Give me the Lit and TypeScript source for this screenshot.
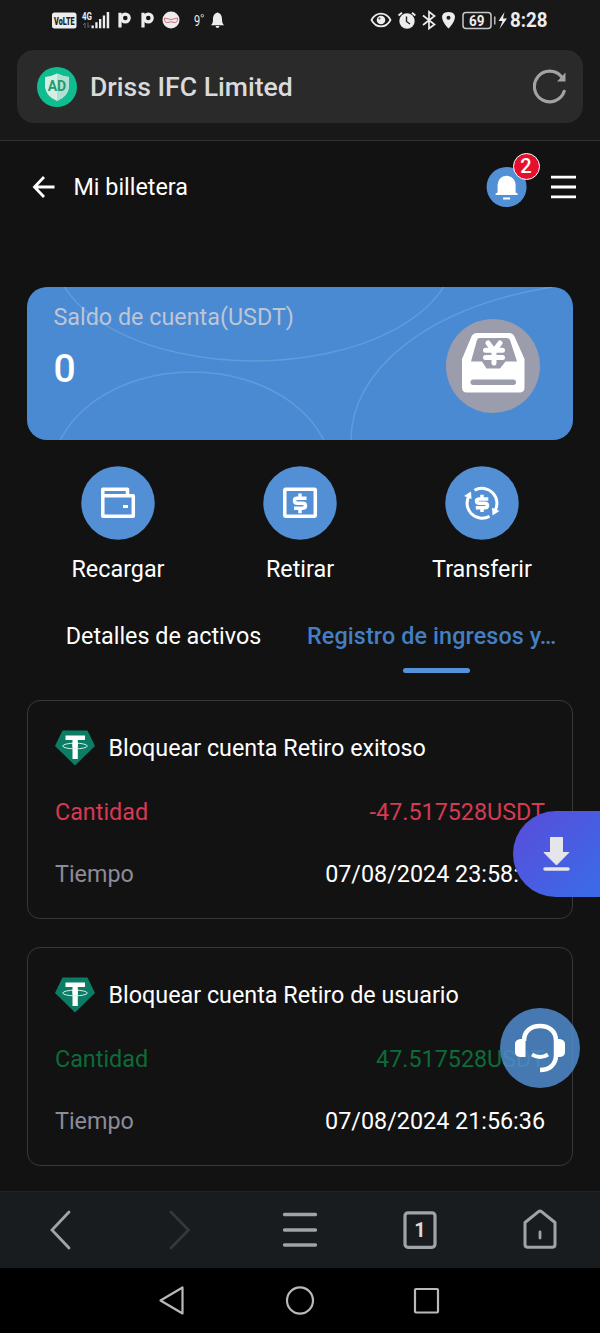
import { LitElement, html, css, svg } from "lit";
import { customElement, property } from "lit/decorators.js";

@customElement("record-card")
class RecordCard extends LitElement {
  @property() heading = "";
  @property() amount = "";
  @property() time = "";
  @property() tone = "loss";

  static styles = css`
    :host { display: block; }
    .card {
      box-sizing: border-box; height: 219px; padding: 24px 27px 0 27px;
      border: 1.5px solid #38383a; border-radius: 13px;
      display: flex; flex-direction: column;
    }
    .title { display: flex; align-items: center; height: 46px; gap: 13.5px; color: #fff; }
    .title svg { display: block; flex: none; }
    .row { display: flex; justify-content: space-between; align-items: center; height: 34px; color: #fff; }
    .amount { margin-top: 24px; margin-bottom: 28px; }
    .label { color: #8c8b99; }
    .loss, .loss .label { color: #d63a54; }
    .gain, .gain .label { color: #0d6b39; }
    .clipped { padding-right: 26.2px; }
  `;

  render() {
    return html`
      <div class="card">
        <div class="title">
          <svg width="40" height="36" viewBox="0 0 40 36">
            <path d="M7.500 0.500H32.500L40 16L20 35.500L0 16Z" fill="#0b7d65" />
            <path d="M10.500 5.500H30V10H22.800V29H17.500V10H10.500Z" fill="#fff" />
            <ellipse cx="20" cy="16" rx="12.300" ry="2.800" fill="none" stroke="#d9eee8" stroke-width="1" />
            <path d="M17.500 12.500H22.800V17H17.500Z" fill="#fff" />
          </svg>
          <span>${this.heading}</span>
        </div>
        <div class="row amount ${this.tone}"><span class="label">Cantidad</span><span>${this.amount}</span></div>
        <div class="row"><span class="label">Tiempo</span><span class=${this.time.endsWith(":") ? "clipped" : ""}>${this.time}</span></div>
      </div>`;
  }
}

const walletIcon = svg`<g fill="none" stroke="#fff" stroke-width="3.500" stroke-linejoin="round">
  <path d="M21.800 30V23.300H46.500V30M21.800 29.800H52.300V50.200H21.800Z"/><path d="M42 40.500H47" stroke-width="3"/></g>`;
const dollar = svg`<path d="M43.500 32.300H34Q31.500 32.300 31.500 34.700Q31.500 37.200 34.500 37.200H39.500Q42.500 37.200 42.500 39.700Q42.500 42.200 39.500 42.200H31M37 27.500V32.500M37 42V47.300" fill="none" stroke="#fff" stroke-width="3.500"/>`;
const withdrawIcon = svg`<rect x="21.800" y="23.300" width="30.500" height="27" rx="1" fill="none" stroke="#fff" stroke-width="3.500"/>${dollar}`;
const transferIcon = svg`
  <g fill="none" stroke="#fff" stroke-width="3">
    <path d="M29.500 24.300A15 15 0 0 1 49.500 45.500"/><path d="M44.500 50.200A15 15 0 0 1 24.500 29"/>
  </g>
  <path d="M19 30L26 25.500L26.500 33ZM54.500 45L47.500 49.500L47 41.800Z" fill="#fff"/>
  <path d="M43.300 33H34.500Q31.500 33 31.500 35Q31.500 37.200 34.500 37.200H39.500Q42.500 37.200 42.500 39.400Q42.500 41.800 39.500 41.800H30.800M37 28.800V33M37 41.500V46" fill="none" stroke="#fff" stroke-width="3.500"/>`;

@customElement("app-root")
class AppRoot extends LitElement {
  static styles = css`
    :host {
      display: flex; flex-direction: column; position: relative; width: 600px; height: 1333px; overflow: hidden;
      background: #121212; color: #fff; font: 400 23.33px/34px Roboto, sans-serif;
    }
    svg { display: block; flex: none; }
    .chrome { height: 140px; background: #181818; border-bottom: 1px solid #303030; flex: none; }
    .status { height: 50px; }
    .glyph { font-family: Roboto, sans-serif; }
    .address {
      box-sizing: border-box; display: flex; align-items: center; height: 73px; margin: 0 17px;
      padding: 0 16px 0 20px; border-radius: 17px; background: #2a2a2a;
    }
    .site { flex: 1; margin-left: 13px; font-size: 26.6px; font-weight: 500; color: #dadada; padding-top: 1px; }
    .header { box-sizing: border-box; display: flex; align-items: center; height: 91px; padding: 0 24px 0 32px; flex: none; }
    .header .name { flex: 1; margin-left: 18.5px; }
    .bell { position: relative; width: 40px; height: 40px; margin-right: 24px; }
    .badge {
      position: absolute; left: 26.5px; top: -13.5px; box-sizing: border-box; width: 27px; height: 27px;
      border: 1.600px solid #fff; border-radius: 50%; background: #e60f2d;
      font-size: 20px; line-height: 25px; font-weight: 500; text-align: center;
    }
    .balance {
      position: relative; display: flex; justify-content: space-between; height: 153px; margin: 55px 27px 0;
      border-radius: 20px; background: #4a8ad3; overflow: hidden; flex: none;
    }
    .curves { position: absolute; left: 0; top: 0; }
    .figures { position: relative; padding: 13px 0 0 26.500px; }
    .caption { color: #bec5d3; }
    .sum { font-size: 39px; line-height: 46px; font-weight: 500; margin-top: 12px; }
    .safe { position: relative; margin: 32px 33px 0 0; }
    .actions { display: grid; grid-template-columns: repeat(3, 1fr); margin: 26px 27px 0; flex: none; }
    .action { display: flex; flex-direction: column; align-items: center; gap: 12px; }
    .tabs { display: grid; grid-template-columns: 1fr 1fr; margin: 33px 27px 27px; flex: none; }
    .tab { display: flex; flex-direction: column; align-items: center; white-space: nowrap; }
    .active { color: #447fc3; font-weight: 500; letter-spacing: 0.12px; }
    .active .word { align-self: flex-start; margin-left: 7px; }
    .bar { width: 67px; height: 5px; border-radius: 3px; background: #5592da; margin-top: 15px; }
    .list { display: flex; flex-direction: column; gap: 27.500px; margin: 0 27px; height: 491px; flex: none; }
    .toolbar {
      box-sizing: border-box; display: grid; grid-template-columns: repeat(5, 1fr); place-items: center;
      height: 77px; border-top: 1px solid #222527; background: #181c1f; flex: none;
    }
    .system { display: flex; align-items: center; height: 65px; background: #000; flex: none; }
    .download {
      position: absolute; right: 0; top: 811px; width: 87px; height: 86px; border-radius: 43px 0 0 43px;
      background: linear-gradient(135deg, #574fdb 10%, #3c69e7 90%);
    }
    .support {
      position: absolute; left: 500px; top: 1008px; width: 80px; height: 80px; border-radius: 50%;
      background: rgba(81, 141, 209, 0.84);
    }
  `;

  render() {
    return html`
      <div class="chrome">
        <svg class="status" width="600" height="50" viewBox="0 0 600 50">
          <g fill="#ededed" class="glyph">
            <rect x="52" y="12.500" width="24.500" height="16" rx="2.500" />
            <text transform="translate(54 24.700) scale(.66 1)" font-size="11" font-weight="900" fill="#202020">VoLTE</text>
            <text transform="translate(82 19.500) scale(.72 1)" font-size="11" font-weight="700">4G</text>
            <path d="M85 28V23L83 25M88 22.500V27.500L90 25.500" fill="none" stroke="#666" stroke-width="1" />
            <path d="M91.500 25.500h2.300v2.800h-2.300zM95.300 22.300h2.300v6h-2.300zM99 19h2.300v9.300H99zM102.800 15.500h2.300v12.800h-2.300zM106.700 12h2.500v16.300h-2.500z" />
            <g fill="none" stroke="#ededed">
              <path d="M120 12.800V27.500M143 12.800V27.500" stroke-width="3.200" />
              <circle cx="125.300" cy="18" r="3.900" stroke-width="3.200" />
              <circle cx="148.300" cy="18" r="3.900" stroke-width="3.200" />
            </g>
            <circle cx="171" cy="20" r="8.500" />
            <path d="M164.500 18Q171 21 177.500 18Q178 23 174 22.500Q171 21 168 22.500Q164 23 164.500 18Z" fill="#f3e3e5" stroke="#c47a80" stroke-width="1" />
            <text x="194" y="25.500" font-size="15" textLength="6.200" lengthAdjust="spacingAndGlyphs">9</text>
            <circle cx="202.300" cy="15.700" r="1.300" fill="none" stroke="#ededed" stroke-width=".8" />
            <path d="M217.500 12.500C213.500 13.500 213 17 213 19.500C213 23 212 24 211 25.200H224C223 24 222 23 222 19.500C222 17 221.500 13.500 217.500 12.500ZM215.500 26H219.500Q219 28 217.500 28Q216 28 215.500 26Z" />
            <path d="M371.500 20C376 11.500 386 11.500 390.500 20C386 28.500 376 28.500 371.500 20Z" fill="none" stroke="#ededed" stroke-width="1.700" />
            <circle cx="381" cy="20" r="4.300" /><circle cx="379.500" cy="18.500" r="1" fill="#444" />
            <circle cx="407" cy="21" r="7.700" />
            <path d="M398.500 15.500L402 12.800M415.300 15.500L412 12.800" stroke="#ededed" stroke-width="2" fill="none" />
            <path d="M406.500 16.500V21.500L410 24" fill="none" stroke="#252525" stroke-width="1.400" />
            <path d="M423 15.500L434.500 24.500L429 28.500V11.800L434.500 16L423 25" fill="none" stroke="#ededed" stroke-width="1.700" />
            <path d="M448.500 12C438.500 12.500 441.500 21.500 448.500 28.500C455.500 21.500 458.500 12.500 448.500 12Z" /><circle cx="448.500" cy="17.800" r="2" fill="#222" />
            <rect x="463" y="12.500" width="28" height="16" rx="3" fill="none" stroke="#c8c8c8" stroke-width="1.500" />
            <text x="469" y="25.700" font-size="14.500" font-weight="700" textLength="15.500" lengthAdjust="spacingAndGlyphs">69</text>
            <rect x="494" y="16.500" width="1.500" height="8" fill="#bbb" />
            <path d="M504.500 12L498.500 21H502.500L499.500 29L507 18.500H503Z" />
            <text x="510" y="27.200" font-size="20" font-weight="700" textLength="37.500" lengthAdjust="spacingAndGlyphs">8:28</text>
          </g>
        </svg>
        <div class="address">
          <svg width="40" height="40" viewBox="0 0 40 40">
            <circle cx="20" cy="20" r="20" fill="#10bd91" />
            <path d="M20 6.500Q26 9.500 32 10V20Q31 29.500 20 34Q9 29.500 8 20V10Q14 9.500 20 6.500Z" fill="#d5eee5" />
            <path d="M20 6.500Q26 9.500 32 10V20Q31 29.500 20 34Z" fill="#b2dfcf" />
            <text class="glyph" x="10.700" y="24.200" font-size="14.500" font-weight="700" fill="#239c70" textLength="18.500" lengthAdjust="spacingAndGlyphs">AD</text>
          </svg>
          <span class="site">Driss IFC Limited</span>
          <svg width="34" height="36" viewBox="0 0 34 36">
            <path d="M31.200 22.300A15.300 15.300 0 1 1 28.500 7.800" fill="none" stroke="#a2a3a7" stroke-width="3.200" stroke-linecap="round" />
            <path d="M24 12.500L32.500 3.500V12.500Z" fill="#a2a3a7" />
          </svg>
        </div>
      </div>

      <div class="header">
        <svg width="23" height="24" viewBox="0 0 23 24">
          <path d="M22.500 12H2.500M12 2L2.500 12L12 22" fill="none" stroke="#fff" stroke-width="2.800" />
        </svg>
        <span class="name">Mi billetera</span>
        <div class="bell">
          <svg width="41" height="40" viewBox="0 0 41 40">
            <g transform="translate(.6 0)">
              <circle cx="20" cy="20" r="20" fill="#5290d6" />
              <path d="M11 25.500V18Q11.500 9.500 20 8.800Q28.500 9.500 29 18V25.500L31 26.500V28H9V26.500ZM16.500 30.500H23.500V32.500H16.500Z" fill="#fff" />
            </g>
          </svg>
          <span class="badge">2</span>
        </div>
        <svg width="26" height="24" viewBox="0 0 26 24">
          <path d="M1 2.200H26M1 12H26M1 21.800H26" stroke="#fff" stroke-width="2.800" />
        </svg>
      </div>

      <div class="balance">
        <svg class="curves" width="546" height="153" viewBox="27 287 546 153">
          <g fill="none" stroke="#629bdc" stroke-width="1.500">
            <ellipse cx="254" cy="252" rx="200" ry="109" />
            <ellipse cx="192" cy="475" rx="140" ry="103" />
            <path d="M351 440C351 372 424 308 552 287" />
          </g>
        </svg>
        <div class="figures">
          <div class="caption">Saldo de cuenta(USDT)</div>
          <div class="sum">0</div>
        </div>
        <svg class="safe" width="94" height="94" viewBox="0 0 94 94">
          <circle cx="47" cy="47" r="47" fill="#9b9cac" />
          <path d="M31 14H63Q67 14 68.500 17.500L78.500 40V68.500Q78.500 73.500 73.500 73.500H21Q16 73.500 16 68.500V40L25.500 17.500Q27 14 31 14Z" fill="#fff" />
          <path d="M33.500 19H61Q63 19 64 21L71 42.500H59.500L54 49.500H40.500L36 42.500H25L31 21Q31.500 19 33.500 19Z" fill="#9b9cac" />
          <path d="M42 24L48 32L54 24M39.500 31.200H56.500M39.500 38.500H56.500M48 31V44" fill="none" stroke="#fff" stroke-width="5" stroke-linecap="round" stroke-linejoin="round" />
          <rect x="24.500" y="60.500" width="45.500" height="5.500" rx="2.700" fill="#9b9cac" />
        </svg>
      </div>

      <div class="actions">
        ${[["Recargar", walletIcon], ["Retirar", withdrawIcon], ["Transferir", transferIcon]].map(
          ([label, icon]) => html`
            <div class="action">
              <svg width="74" height="74" viewBox="0 0 74 74"><circle cx="37" cy="37" r="36.700" fill="#528fd5" />${icon}</svg>
              <span>${label}</span>
            </div>`
        )}
      </div>

      <div class="tabs">
        <div class="tab"><span>Detalles de activos</span></div>
        <div class="tab active"><span class="word">Registro de ingresos y…</span><span class="bar"></span></div>
      </div>

      <div class="list">
        <record-card heading="Bloquear cuenta Retiro exitoso" amount="-47.517528USDT" time="07/08/2024 23:58:" tone="loss"></record-card>
        <record-card heading="Bloquear cuenta Retiro de usuario" amount="47.517528USDT" time="07/08/2024 21:56:36" tone="gain"></record-card>
      </div>

      <div class="toolbar">
        <svg width="40" height="44" viewBox="0 0 40 44"><path d="M29 4L12 22L29 40" fill="none" stroke="#a0a3a7" stroke-width="2.800" stroke-linecap="round" /></svg>
        <svg width="40" height="44" viewBox="0 0 40 44"><path d="M11 4L28.500 22L11 40" fill="none" stroke="#34383a" stroke-width="2.800" stroke-linecap="round" /></svg>
        <svg width="40" height="44" viewBox="0 0 40 44"><path d="M4.500 6.500H35.500M4.500 22H35.500M4.500 37H35.500" stroke="#a0a3a7" stroke-width="3.400" stroke-linecap="round" /></svg>
        <svg width="40" height="44" viewBox="0 0 40 44">
          <rect x="5" y="4.800" width="30" height="34.500" rx="3" fill="none" stroke="#a0a3a7" stroke-width="3.200" />
          <text class="glyph" x="20" y="29" text-anchor="middle" font-size="20" font-weight="700" fill="#d8d8da">1</text>
        </svg>
        <svg width="40" height="44" viewBox="0 0 40 44">
          <path d="M5 14.500L18.500 3.700Q20 2.500 21.500 3.700L35 14.500V36.500Q35 39.300 32 39.300H8Q5 39.300 5 36.500Z" fill="none" stroke="#a0a3a7" stroke-width="3" stroke-linejoin="round" />
          <path d="M20 24V30" stroke="#a0a3a7" stroke-width="2.800" stroke-linecap="round" />
        </svg>
      </div>

      <div class="system">
        <svg width="600" height="65" viewBox="0 0 600 65">
          <g fill="none" stroke="#b9b9b9" stroke-width="2.200" stroke-linejoin="round">
            <path d="M182.500 19.500V45.500L160.500 32.500Z" />
            <ellipse cx="300" cy="32.500" rx="13" ry="13.200" />
            <rect x="415" y="21" width="23" height="23.500" rx="1" />
          </g>
        </svg>
      </div>

      <div class="download">
        <svg width="87" height="86" viewBox="0 0 87 86">
          <path d="M37.500 26.500H49.500V41.500H55.800L43.500 54L31 41.500H37.500Z" fill="#e5e5ea" stroke="#e5e5ea" stroke-linejoin="round" />
          <path d="M32 58H55" stroke="#e5e5ea" stroke-width="3.500" stroke-linecap="round" />
        </svg>
      </div>
      <div class="support">
        <svg width="80" height="80" viewBox="0 0 80 80">
          <path d="M24 33C24 23 31 18 40 18C49 18 56 23 56 33V47C56 57 49 62 40 62" fill="none" stroke="#fff" stroke-width="4.500" />
          <path d="M25.500 31H20Q15 32 15 36V44Q15 48.500 20 49H25.500ZM54.500 31H60Q65 32 65 36V44Q65 48.500 60 49H54.500Z" fill="#fff" />
          <path d="M32 46.500Q40 51.500 48 46.500" fill="none" stroke="#fff" stroke-width="3.900" />
        </svg>
      </div>`;
  }
}
